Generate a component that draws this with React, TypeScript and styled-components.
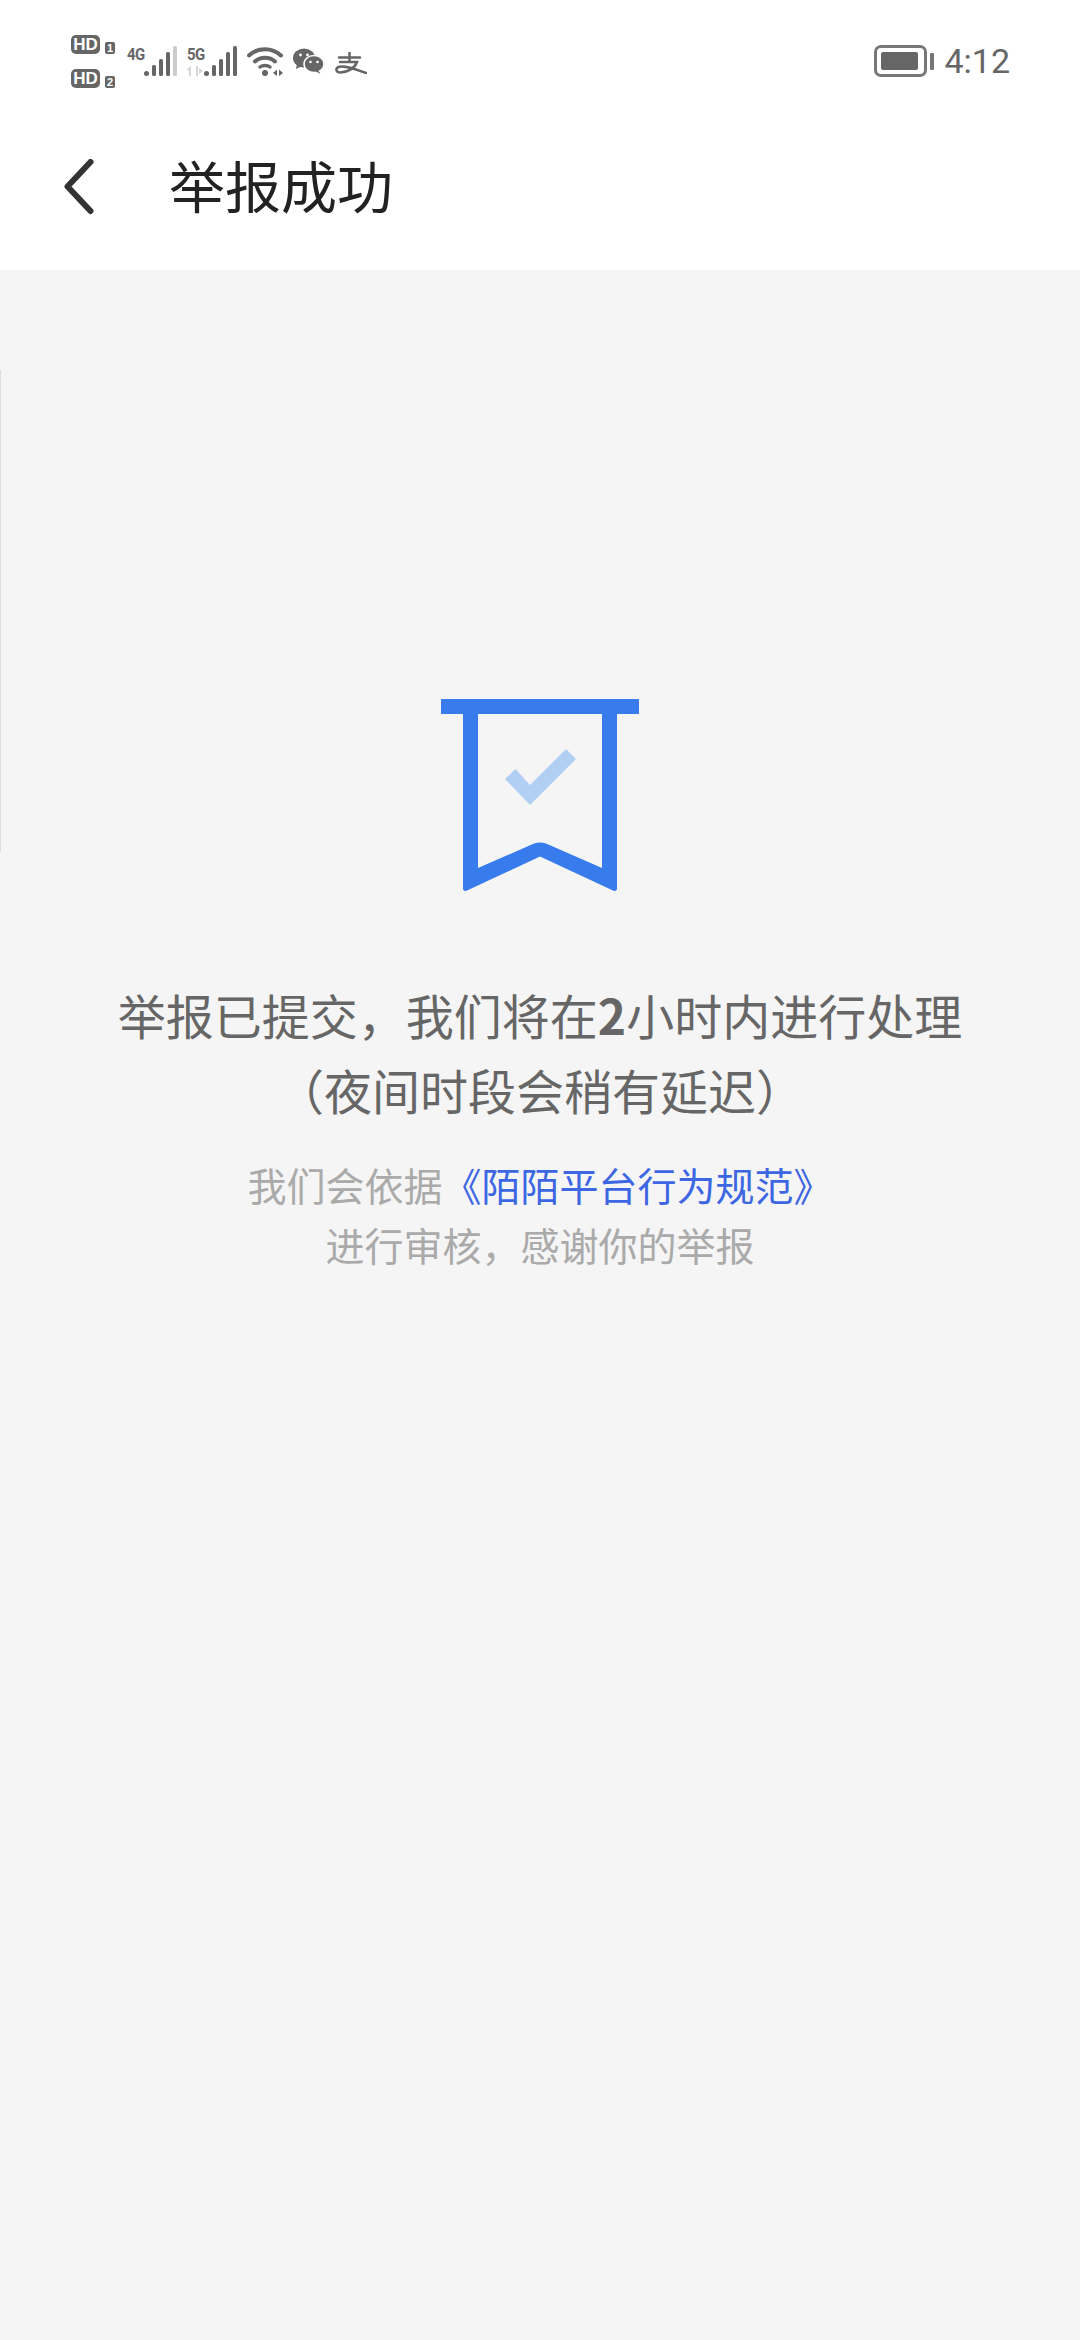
import React from 'react'
import styled, { createGlobalStyle } from 'styled-components'

const GlobalStyle = createGlobalStyle`
  html, body {
    margin: 0;
    padding: 0;
    background: #f5f5f5;
  }
  * {
    box-sizing: border-box;
  }
`

const SignalBars = ({ lastFaded }: { lastFaded?: boolean }) => (
  <svg width='34' height='30' viewBox='0 0 34 30'>
    <circle cx='2.5' cy='27.5' r='2.5' fill='#666' />
    <rect x='8' y='19' width='4' height='11' rx='1.5' fill='#666' />
    <rect x='15' y='13' width='4' height='17' rx='1.5' fill='#666' />
    <rect x='22' y='6' width='4' height='24' rx='1.5' fill='#666' />
    <rect x='29' y='0' width='4' height='30' rx='1.5' fill={lastFaded ? '#ccc' : '#666'} />
  </svg>
)

const App: React.FC = () => {
  return (
    <Page>
      <GlobalStyle />
      <TopArea>
        <StatusBar>
          <StatusLeft>
            <SimColumn>
              <SimRow>
                <HdBadge>HD</HdBadge>
                <SimNumber>1</SimNumber>
              </SimRow>
              <SimRow>
                <HdBadge>HD</HdBadge>
                <SimNumber>2</SimNumber>
              </SimRow>
            </SimColumn>
            <Network>
              <NetworkLabel>4G</NetworkLabel>
              <SignalBars lastFaded />
            </Network>
            <Network>
              <NetworkStack>
                <NetworkLabel>5G</NetworkLabel>
                <Arrows>
                  <svg width='16' height='10' viewBox='0 0 16 10'>
                    <path d='M4 0v10H2V4L0 5V3.500zM9 0h2v10H9zM12 2l4 3-4 3z' fill='#d6d6d6' />
                  </svg>
                </Arrows>
              </NetworkStack>
              <SignalBars />
            </Network>
            <svg width='37' height='30' viewBox='0 0 37 30'>
              <path d='M2 9.500C11 1 25 1 34 9.500' fill='none' stroke='#666' strokeWidth='4' strokeLinecap='round' />
              <path d='M8 15.500C13.500 10.500 22.500 10.500 28 15.500' fill='none' stroke='#666' strokeWidth='4' strokeLinecap='round' />
              <path d='M13 21C15.500 19 20.500 19 23 21' fill='none' stroke='#666' strokeWidth='3.500' strokeLinecap='round' />
              <circle cx='18' cy='27' r='3' fill='#666' />
              <path d='M26 27l4-3.500V30zM32 23.500l4 3.500-4 3z' fill='#666' />
            </svg>
            <WechatIcon width='31' height='26' viewBox='0 0 31 26'>
              <ellipse cx='11' cy='10' rx='11' ry='9.500' fill='#666' />
              <path d='M4 16l-1 5 6-3z' fill='#666' />
              <ellipse cx='21' cy='16' rx='10' ry='8.500' fill='#666' stroke='#fff' strokeWidth='1.500' />
              <path d='M25 22l2.500 4-5.500-3z' fill='#666' />
              <circle cx='7.500' cy='7' r='1.400' fill='#fff' />
              <circle cx='14.500' cy='7' r='1.400' fill='#fff' />
              <circle cx='17.500' cy='14' r='1.300' fill='#fff' />
              <circle cx='24.500' cy='14' r='1.300' fill='#fff' />
            </WechatIcon>
            <AlipayIcon width='32' height='22' viewBox='0 0 32 22'>
              <path
                d='M4 5.500H25M14.500 0V10M5 10H22C20 16 13 20 5.500 20.500C1 20.500 0 16.500 3.500 15C9 13 20 17 31 21'
                fill='none'
                stroke='#666'
                strokeWidth='2.500'
                strokeLinecap='round'
              />
            </AlipayIcon>
          </StatusLeft>
          <StatusRight>
            <BatteryBody>
              <BatteryFill />
            </BatteryBody>
            <BatteryNub />
            <Clock>4:12</Clock>
          </StatusRight>
        </StatusBar>
        <Header>
          <BackIcon width='30' height='56' viewBox='0 0 30 56'>
            <path d='M26.500 3L3.500 27.500L26.500 52' fill='none' stroke='#333' strokeWidth='6' strokeLinecap='round' strokeLinejoin='round' />
          </BackIcon>
          <Title>举报成功</Title>
        </Header>
      </TopArea>
      <Main>
        <EdgeLine />
        <BookmarkIcon width='198' height='192' viewBox='0 0 198 192'>
          <path d='M0 0H198V15H176V189.500C176 191.500 174 192.500 172 191.500L99 157.500L26 191.500C24 192.500 22 191.500 22 189.500V15H0Z' fill='#377bec' />
          <path d='M37 15H161V169L105 144.500C101 143 97 143 93 144.500L37 169Z' fill='#f5f5f5' />
          <path d='M64 80L74.500 70L89 86L125 50L135 60L89 106Z' fill='#b0cff2' />
        </BookmarkIcon>
        <Message>
          举报已提交，我们将在<strong>2</strong>小时内进行处理
          <br />
          （夜间时段会稍有延迟）
        </Message>
        <Note>
          我们会依据<NoteLink>《陌陌平台行为规范》</NoteLink>
          <br />
          进行审核，感谢你的举报
        </Note>
      </Main>
    </Page>
  )
}

const cjkStack = `'Noto Sans CJK SC', 'Noto Sans', sans-serif`

const Page = styled.div`
  width: 1080px;
  height: 2340px;
  display: flex;
  flex-direction: column;
  overflow: hidden;
  background: #f5f5f5;
  font-family: ${cjkStack};
`

const TopArea = styled.div`
  height: 270px;
  background: #ffffff;
`

const StatusBar = styled.div`
  height: 106px;
  padding: 35px 70px 0 71px;
  display: flex;
  justify-content: space-between;
  align-items: flex-start;
`

const StatusLeft = styled.div`
  display: flex;
  align-items: flex-start;
  gap: 9px;

  > svg {
    margin-top: 11px;
  }
`

const SimColumn = styled.div`
  display: flex;
  flex-direction: column;
  gap: 15px;
  margin-right: 3px;
`

const SimRow = styled.div`
  display: flex;
  align-items: flex-end;
  gap: 5px;
`

const HdBadge = styled.span`
  width: 29px;
  height: 19px;
  border-radius: 5px;
  background: #666666;
  color: #ffffff;
  font: 700 17px/19px 'Liberation Sans', sans-serif;
  text-align: center;
`

const SimNumber = styled.span`
  width: 10px;
  height: 12px;
  border-radius: 2px;
  background: #666666;
  color: #ffffff;
  font: 700 11px/12px 'Liberation Sans', sans-serif;
  text-align: center;
`

const Network = styled.div`
  display: flex;
  align-items: flex-end;
  height: 41px;
`

const NetworkStack = styled.div`
  display: flex;
  flex-direction: column;
  align-self: flex-start;
  margin-top: 12px;
`

const NetworkLabel = styled.span`
  width: 17px;
  align-self: flex-start;
  margin-top: 12px;
  font: 700 15px/14px 'Roboto', sans-serif;
  letter-spacing: -0.5px;
  transform: scaleY(1.1);
  color: #666666;
  ${NetworkStack} & {
    margin-top: 0;
  }
`

const Arrows = styled.span`
  display: block;
  height: 10px;
  margin-top: 5px;
  line-height: 0;
`

const WechatIcon = styled.svg`
  margin-top: 13px !important;
`

const AlipayIcon = styled.svg`
  margin: 17px 0 0 2px !important;
`

const StatusRight = styled.div`
  display: flex;
  align-items: center;
  margin-top: 10px;
`

const BatteryBody = styled.div`
  width: 53px;
  height: 32px;
  border: 3px solid #777777;
  border-radius: 7px;
  padding: 4px;
`

const BatteryFill = styled.div`
  width: 37px;
  height: 18px;
  background: #666666;
  border-radius: 2px;
`

const BatteryNub = styled.div`
  width: 4px;
  height: 17px;
  margin-left: 3px;
  border-radius: 1px;
  background: #777777;
`

const Clock = styled.span`
  margin-left: 10px;
  color: #666666;
  font: 400 34px/32px 'Roboto', sans-serif;
`

const Header = styled.div`
  height: 161px;
  padding: 0 0 0 64px;
  display: flex;
  align-items: center;
`

const BackIcon = styled.svg`
  flex: none;
`

const Title = styled.h1`
  margin: 0 0 5px 75px;
  font-size: 56px;
  font-weight: 400;
  line-height: 76px;
  color: #222222;
`

const Main = styled.main`
  position: relative;
  flex: 1;
  padding-top: 429px;
  display: flex;
  flex-direction: column;
  align-items: center;
`

const EdgeLine = styled.div`
  position: absolute;
  left: 0;
  top: 100px;
  width: 1px;
  height: 482px;
  background: #dcdcdc;
`

const BookmarkIcon = styled.svg`
  flex: none;
`

const Message = styled.p`
  margin: 86px 0 0;
  font-size: 48px;
  line-height: 75px;
  text-align: center;
  color: #666666;

  strong {
    font-weight: 700;
  }
`

const Note = styled.p`
  margin: 27px 0 0;
  font-size: 39px;
  line-height: 60px;
  text-align: center;
  color: #aaaaaa;
`

const NoteLink = styled.span`
  color: #3d66e3;
`

export default App
